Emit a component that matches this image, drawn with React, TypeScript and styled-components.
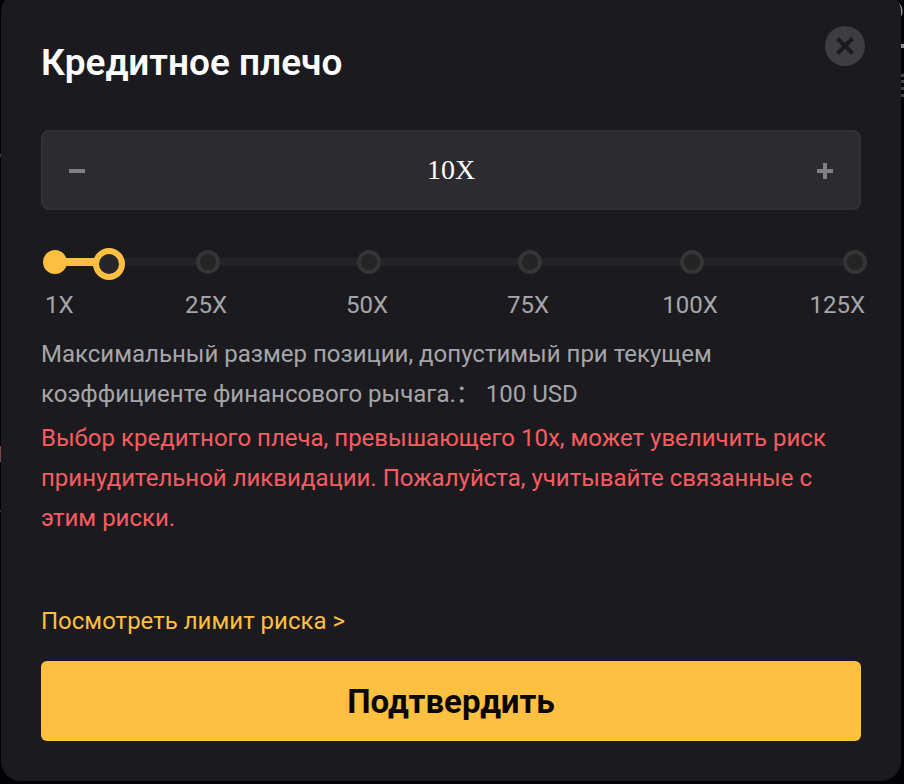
import React, { useState } from "react";
import styled, { createGlobalStyle, css } from "styled-components";

const color = {
  page: "#030305",
  panel: "#1b1b1f",
  field: "#2c2c30",
  fieldBorder: "#323236",
  rail: "#242428",
  dot: "#242424",
  dotRing: "#353535",
  glyph: "#7f7f85",
  muted: "#a6a6aa",
  accent: "#ffbf41",
  danger: "#fa5c61",
};

const GlobalStyle = createGlobalStyle`
  *, *::before, *::after { box-sizing: border-box; }
  body {
    margin: 0;
    overflow: hidden;
    background: ${color.page};
    color: ${color.muted};
    font-family: Roboto, "Noto Sans", "Noto Sans CJK SC", sans-serif;
    font-size: 24px;
    line-height: 40px;
  }
  button, input { margin: 0; padding: 0; border: 0; font: inherit; color: inherit; background: none; }
  button { cursor: pointer; }
`;

const Edge = styled.svg<{ $side: "left" | "right" }>`
  position: absolute;
  top: 0;
  ${(p) => p.$side}: 0;
  z-index: -1;
  display: block;
`;

const Dialog = styled.div`
  display: flex;
  flex-direction: column;
  margin: -8px 3px 0 1px;
  padding: 34px 40px 40px;
  border-radius: 20px;
  background: ${color.panel};
`;

const Header = styled.header`
  display: flex;
  align-items: flex-start;
  justify-content: space-between;
  margin-right: -4px;
`;

const Title = styled.h1`
  margin: 13px 0 0;
  color: #fdfdfd;
  font-size: 37px;
  font-weight: 600;
  line-height: 48px;
`;

const CloseButton = styled.button`
  display: flex;
  border-radius: 50%;
`;

const Field = styled.div`
  display: flex;
  height: 80px;
  margin-top: 43px;
  border: 2px solid ${color.fieldBorder};
  border-radius: 8px;
  background: ${color.field};
`;

const StepButton = styled.button`
  display: flex;
  flex: 0 0 68px;
  align-items: center;
  justify-content: center;
  color: ${color.glyph};
`;

const ValueInput = styled.input`
  flex: 1;
  min-width: 0;
  outline: none;
  color: #fff;
  font-family: "Liberation Serif", serif;
  font-size: 28px;
  text-align: center;
`;

const Slider = styled.div`
  margin: 38px -6px 0 0;
`;

const Track = styled.div`
  display: grid;
  align-items: start;
  height: 32px;

  & > * { grid-area: 1 / 1; }
`;

const Rail = styled.div`
  height: 8px;
  margin: 10px 12px 0 14px;
  background: ${color.rail};
`;

const Fill = styled.div`
  height: 100%;
  background: ${color.accent};
`;

const stopColumns = css`
  display: grid;
  grid-template-columns: 24px 129fr 24px 137fr 24px 137fr 24px 138fr 24px 139fr 24px;

  & > * { grid-row: 1; }
  & > :nth-child(1) { grid-column: 1; }
  & > :nth-child(2) { grid-column: 3; }
  & > :nth-child(3) { grid-column: 5; }
  & > :nth-child(4) { grid-column: 7; }
  & > :nth-child(5) { grid-column: 9; }
  & > :nth-child(6) { grid-column: 11; }
`;

const Dots = styled.div`
  ${stopColumns}
  padding: 2px 0 0 2px;
`;

const Dot = styled.span<{ $active: boolean }>`
  height: 24px;
  border: 4px solid ${(p) => (p.$active ? color.accent : color.dotRing)};
  border-radius: 50%;
  background: ${(p) => (p.$active ? color.accent : color.dot)};
`;

const Range = styled.input`
  appearance: none;
  height: 32px;
  margin: 0 -4px 0 -6px;
  outline: none;
  cursor: pointer;

  &::-webkit-slider-thumb {
    appearance: none;
    width: 32px;
    height: 32px;
    border: 6px solid ${color.accent};
    border-radius: 50%;
    background: #262628;
  }
`;

const Labels = styled.div`
  ${stopColumns}
  justify-items: center;
  margin-top: 5px;
  padding-right: 2px;
`;

const StopLabel = styled.button`
  white-space: nowrap;

  &:first-child { justify-self: start; padding-left: 4px; }
  &:last-child { justify-self: end; }
  &:not(:first-child):not(:last-child) { margin: 0 -40px; }
`;

const Note = styled.p<{ $danger?: boolean }>`
  margin: ${(p) => (p.$danger ? "4px" : "9px")} 0 0;
  color: ${(p) => (p.$danger ? color.danger : color.muted)};
`;

const LimitLink = styled.a`
  align-self: flex-start;
  margin-top: 63px;
  color: ${color.accent};
  text-decoration: none;
`;

const ConfirmButton = styled.button`
  height: 80px;
  margin-top: 20px;
  padding-top: 2px;
  border-radius: 6px;
  background: ${color.accent};
  color: #080604;
  font-size: 33px;
  font-weight: 700;
`;

const MIN = 1;
const MAX = 125;
const STOPS = [1, 25, 50, 75, 100, 125];
const clamp = (n: number) => Math.min(MAX, Math.max(MIN, n));

export default function App() {
  const [leverage, setLeverage] = useState(10);
  const progress = ((leverage - MIN) / (MAX - MIN)) * 100;

  return (
    <>
      <GlobalStyle />
      <Edge $side="left" width="1" height="784" aria-hidden="true">
        <rect y="154" width="1" height="3" fill="#3a3a3a" />
        <rect y="446" width="1" height="13" fill="#8a4245" />
        <rect y="459" width="1" height="3" fill="#55555a" />
        <rect y="510" width="1" height="2" fill="#3b2f48" />
      </Edge>
      <Edge $side="right" width="8" height="100" aria-hidden="true">
        <path d="M2 3.500q5 4 3 12" fill="none" stroke="#8c8c8c" strokeWidth="2" />
        <rect x="5" y="44" width="3" height="4" fill="#8f8f8f" />
        <path d="M5 75.500h3M5 81.500h3M5 88.500h3M5 95.500h3" stroke="#444" strokeWidth="3" />
      </Edge>

      <Dialog role="dialog" aria-labelledby="leverage-title">
        <Header>
          <Title id="leverage-title">Кредитное плечо</Title>
          <CloseButton type="button" aria-label="Закрыть">
            <svg width="40" height="40" viewBox="0 0 40 40" aria-hidden="true">
              <circle cx="20" cy="20" r="20" fill="#3d3d42" />
              <path d="M12.500 12.500l15 15M27.500 12.500l-15 15" stroke={color.panel} strokeWidth="4" />
            </svg>
          </CloseButton>
        </Header>

        <Field>
          <StepButton type="button" aria-label="Уменьшить" onClick={() => setLeverage(clamp(leverage - 1))}>
            <svg width="16" height="16" viewBox="0 0 16 16" aria-hidden="true">
              <path d="M0 9h16" stroke="currentColor" strokeWidth="4" />
            </svg>
          </StepButton>
          <ValueInput
            aria-label="Кредитное плечо"
            value={`${leverage}X`}
            onChange={(e) => setLeverage(clamp(parseInt(e.target.value, 10) || MIN))}
          />
          <StepButton type="button" aria-label="Увеличить" onClick={() => setLeverage(clamp(leverage + 1))}>
            <svg width="16" height="18" viewBox="0 0 16 18" aria-hidden="true">
              <path d="M0 10h16M8 2v16" stroke="currentColor" strokeWidth="4" />
            </svg>
          </StepButton>
        </Field>

        <Slider>
          <Track>
            <Rail>
              <Fill style={{ width: `${progress}%` }} />
            </Rail>
            <Dots>
              {STOPS.map((stop) => (
                <Dot key={stop} $active={stop <= leverage} />
              ))}
            </Dots>
            <Range
              type="range"
              aria-labelledby="leverage-title"
              min={MIN}
              max={MAX}
              value={leverage}
              onChange={(e) => setLeverage(Number(e.target.value))}
            />
          </Track>
          <Labels>
            {STOPS.map((stop) => (
              <StopLabel key={stop} type="button" onClick={() => setLeverage(stop)}>
                {`${stop}X`}
              </StopLabel>
            ))}
          </Labels>
        </Slider>

        <Note>
          Максимальный размер позиции, допустимый при текущем коэффициенте финансового рычага.： 100 USD
        </Note>
        <Note $danger>
          Выбор кредитного плеча, превышающего 10x, может увеличить риск принудительной ликвидации.
          Пожалуйста, учитывайте связанные с этим риски.
        </Note>

        <LimitLink href="#risk-limit">Посмотреть лимит риска &gt;</LimitLink>
        <ConfirmButton type="button">Подтвердить</ConfirmButton>
      </Dialog>
    </>
  );
}
